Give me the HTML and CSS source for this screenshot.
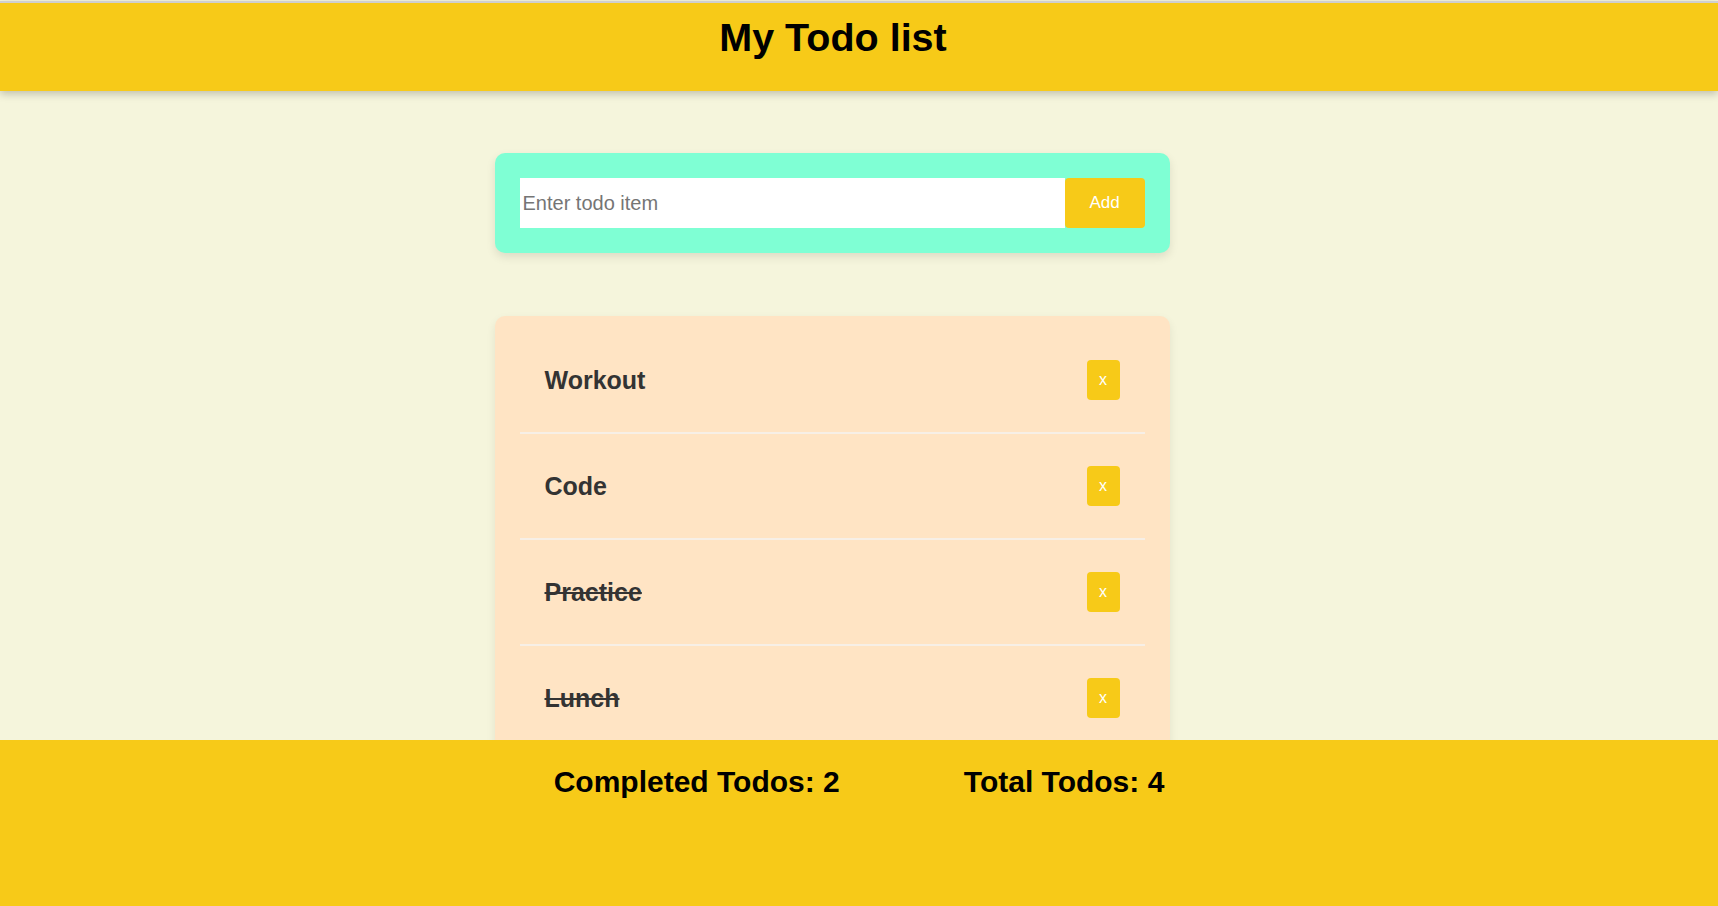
FILE: index.html
```html
<!DOCTYPE html>
<html lang="en">
<head>
<meta charset="utf-8">
<title>My Todo list</title>
<link rel="stylesheet" href="styles.css">
</head>
<body>
  <header class="header">
    <h1 class="title">My Todo list</h1>
  </header>
  <main class="main">
    <form class="add-card" onsubmit="return false">
      <input class="add-input" type="text" placeholder="Enter todo item">
      <button class="add-btn" type="button">Add</button>
    </form>
    <ul class="list-card">
      <li class="item"><span class="item-text">Workout</span><button class="del-btn" type="button">x</button></li>
      <li class="item"><span class="item-text">Code</span><button class="del-btn" type="button">x</button></li>
      <li class="item done"><span class="item-text">Practice</span><button class="del-btn" type="button">x</button></li>
      <li class="item done"><span class="item-text">Lunch</span><button class="del-btn" type="button">x</button></li>
    </ul>
  </main>
  <footer class="footer">
    <div class="stat">Completed Todos: 2</div>
    <div class="stat">Total Todos: 4</div>
  </footer>
</body>
</html>
```
FILE: styles.css
```css
html, body {
  margin: 0;
  padding: 0;
}
body {
  background: #f5f5dc;
  font-family: "Liberation Sans", Arial, sans-serif;
  min-height: 906px;
  padding-top: 1px;
  box-sizing: border-box;
}
.header {
  background: #f7ca18;
  border-top: 2px solid #cfcfcf;
  height: 90px;
  box-sizing: border-box;
  box-shadow: 0 3px 8px rgba(0, 0, 0, 0.22);
  padding: 12px 52px 0 0;
  position: relative;
}
.title {
  margin: 0;
  text-align: center;
  font-size: 39.5px;
  font-weight: bold;
  color: #000;
  line-height: 45px;
}
.main {
  display: flex;
  flex-direction: column;
  align-items: center;
  padding: 62px 54px 0 0;
}
.add-card {
  width: 675px;
  box-sizing: border-box;
  background: #7fffd4;
  border-radius: 10px;
  padding: 25px;
  display: flex;
  margin: 0;
  box-shadow: 0 4px 10px rgba(0, 0, 0, 0.1);
}
.add-input {
  flex: 1;
  height: 50px;
  box-sizing: border-box;
  border: none;
  outline: none;
  padding: 0 3px;
  font-family: "Liberation Sans", Arial, sans-serif;
  font-size: 20px;
  background: #fff;
  margin: 0;
}
.add-input::placeholder {
  color: #757575;
}
.add-btn {
  width: 80px;
  height: 50px;
  border: none;
  border-radius: 4px;
  background: #f7ca18;
  color: #fff;
  font-family: "Liberation Sans", Arial, sans-serif;
  font-size: 17px;
  margin: 0;
  padding: 0;
}
.list-card {
  list-style: none;
  margin: 63px 0 0 0;
  width: 675px;
  box-sizing: border-box;
  background: #ffe4c4;
  border-radius: 10px;
  padding: 12px 25px;
  box-shadow: 0 4px 10px rgba(0, 0, 0, 0.08);
}
.item {
  height: 106px;
  box-sizing: border-box;
  border-bottom: 2px solid #f7efe6;
  display: flex;
  align-items: center;
  justify-content: space-between;
  padding: 0 25px;
}
.item-text {
  font-size: 25px;
  font-weight: bold;
  color: #333;
}
.done .item-text {
  text-decoration: line-through;
}
.del-btn {
  width: 33px;
  height: 40px;
  border: none;
  border-radius: 4px;
  background: #f7ca18;
  color: #fff;
  font-family: "Liberation Sans", Arial, sans-serif;
  font-size: 16px;
  padding: 0;
  margin: 0;
}
.footer {
  position: fixed;
  left: 0;
  right: 0;
  bottom: 0;
  height: 166px;
  box-sizing: border-box;
  background: #f7ca18;
  display: flex;
  justify-content: center;
  align-items: flex-start;
  gap: 124px;
  padding-top: 25px;
}
.stat {
  font-size: 30px;
  font-weight: bold;
  color: #000;
  line-height: 34px;
}
```
